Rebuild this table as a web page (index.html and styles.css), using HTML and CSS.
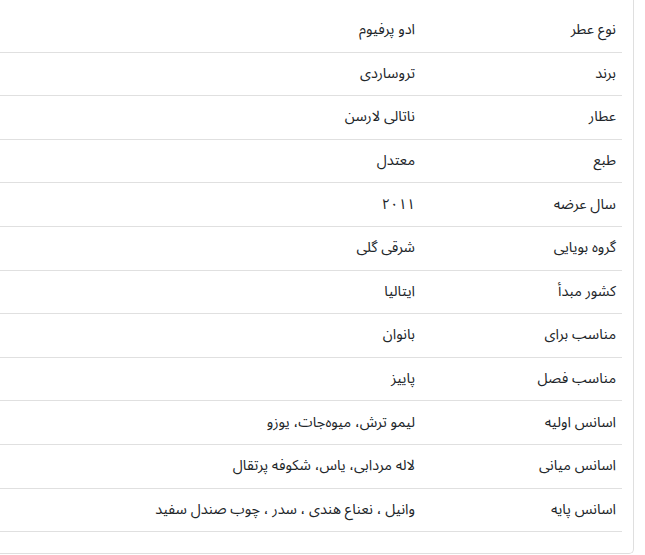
FILE: index.html
```html
<!DOCTYPE html>
<html lang="fa" dir="rtl">
<head>
<meta charset="utf-8">
<link rel="stylesheet" href="styles.css">
</head>
<body>
<div class="page">
  <div class="card">
    <table class="spec">
      <tbody>
        <tr><td class="label">نوع عطر</td><td class="value">ادو پرفیوم</td></tr>
        <tr><td class="label">برند</td><td class="value">تروساردی</td></tr>
        <tr><td class="label">عطار</td><td class="value">ناتالی لارسن</td></tr>
        <tr><td class="label">طبع</td><td class="value">معتدل</td></tr>
        <tr><td class="label">سال عرضه</td><td class="value num">۲۰۱۱</td></tr>
        <tr><td class="label">گروه بویایی</td><td class="value">شرقی گلی</td></tr>
        <tr><td class="label">کشور مبدأ</td><td class="value">ایتالیا</td></tr>
        <tr><td class="label">مناسب برای</td><td class="value">بانوان</td></tr>
        <tr><td class="label">مناسب فصل</td><td class="value">پاییز</td></tr>
        <tr><td class="label">اسانس اولیه</td><td class="value">لیمو ترش، میوه‌جات، یوزو</td></tr>
        <tr><td class="label">اسانس میانی</td><td class="value">لاله مردابی، یاس، شکوفه پرتقال</td></tr>
        <tr><td class="label">اسانس پایه</td><td class="value">وانیل ، نعناع هندی ، سدر ، چوب صندل سفید</td></tr>
      </tbody>
    </table>
  </div>
</div>
</body>
</html>
```
FILE: styles.css
```css
html, body {
  margin: 0;
  padding: 0;
  background: #fff;
}
body {
  font-family: "Noto Sans Arabic", "DejaVu Sans", sans-serif;
  font-size: 14.5px;
  color: #212529;
  overflow: hidden;
}
.page {
  width: 645px;
  height: 555px;
  direction: rtl;
}
.card {
  width: 634px;
  box-sizing: border-box;
  margin-right: 11px;
  padding: 9px 11px 21px 0;
  border-right: 1px solid #dfdfdf;
  border-bottom: 1px solid #dfdfdf;
  border-bottom-right-radius: 5px;
}
.spec {
  width: 100%;
  border-collapse: collapse;
}
.spec td {
  height: 41.6px;
  padding: 0 6px 1px;
  border-bottom: 1px solid #e0e0e0;
  text-align: right;
  vertical-align: middle;
  white-space: nowrap;
}
.spec .label {
  width: 189px;
}
.spec .num {
  letter-spacing: -1px;
}
```
